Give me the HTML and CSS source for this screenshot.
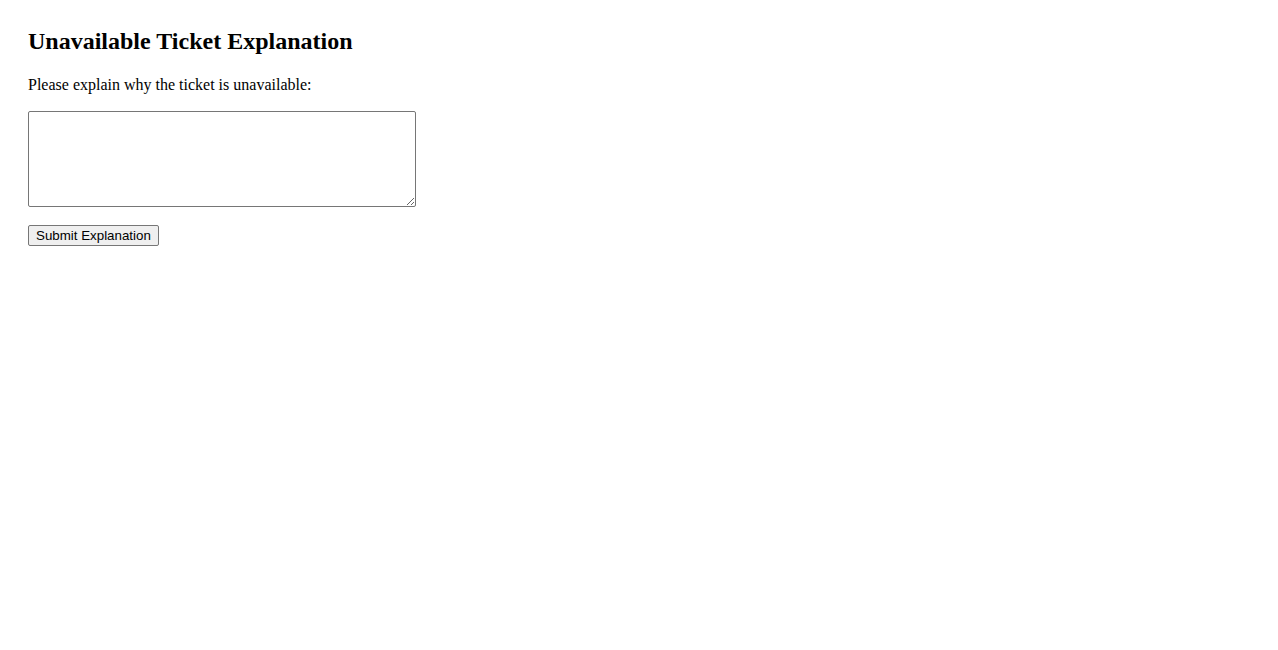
FILE: index.html
```html
<!DOCTYPE html>
<html>
<head>
<meta charset="utf-8">
<link rel="stylesheet" href="styles.css">
</head>
<body>
<main class="page">
  <h2 class="title">Unavailable Ticket Explanation</h2>
  <p class="prompt">Please explain why the ticket is unavailable:</p>
  <textarea class="explain"></textarea>
  <button class="submit" type="button">Submit Explanation</button>
</main>
</body>
</html>
```

FILE: styles.css
```css
html, body {
  margin: 0;
  padding: 0;
  background: #ffffff;
}
.page {
  padding: 28px;
  font-family: "Liberation Serif", "Times New Roman", serif;
  color: #000;
  display: flex;
  flex-direction: column;
  align-items: flex-start;
}
.title {
  font-size: 24px;
  font-weight: bold;
  margin: 0 0 21px;
  line-height: 27px;
}
.prompt {
  font-size: 16px;
  margin: 0 0 17px;
  line-height: 18px;
}
.explain {
  width: 388px;
  height: 96px;
  box-sizing: border-box;
  border: 1px solid #767676;
  border-radius: 2px;
  margin: 0;
  font-family: "Liberation Mono", monospace;
  font-size: 13.333px;
}
.submit {
  margin-top: 18px;
  height: 21px;
  box-sizing: border-box;
  padding: 1px 7px;
  font-family: "Liberation Sans", Arial, sans-serif;
  font-size: 13.333px;
  color: #000;
  background: #efefef;
  border: 1px solid #767676;
  border-radius: 2px;
}
```
